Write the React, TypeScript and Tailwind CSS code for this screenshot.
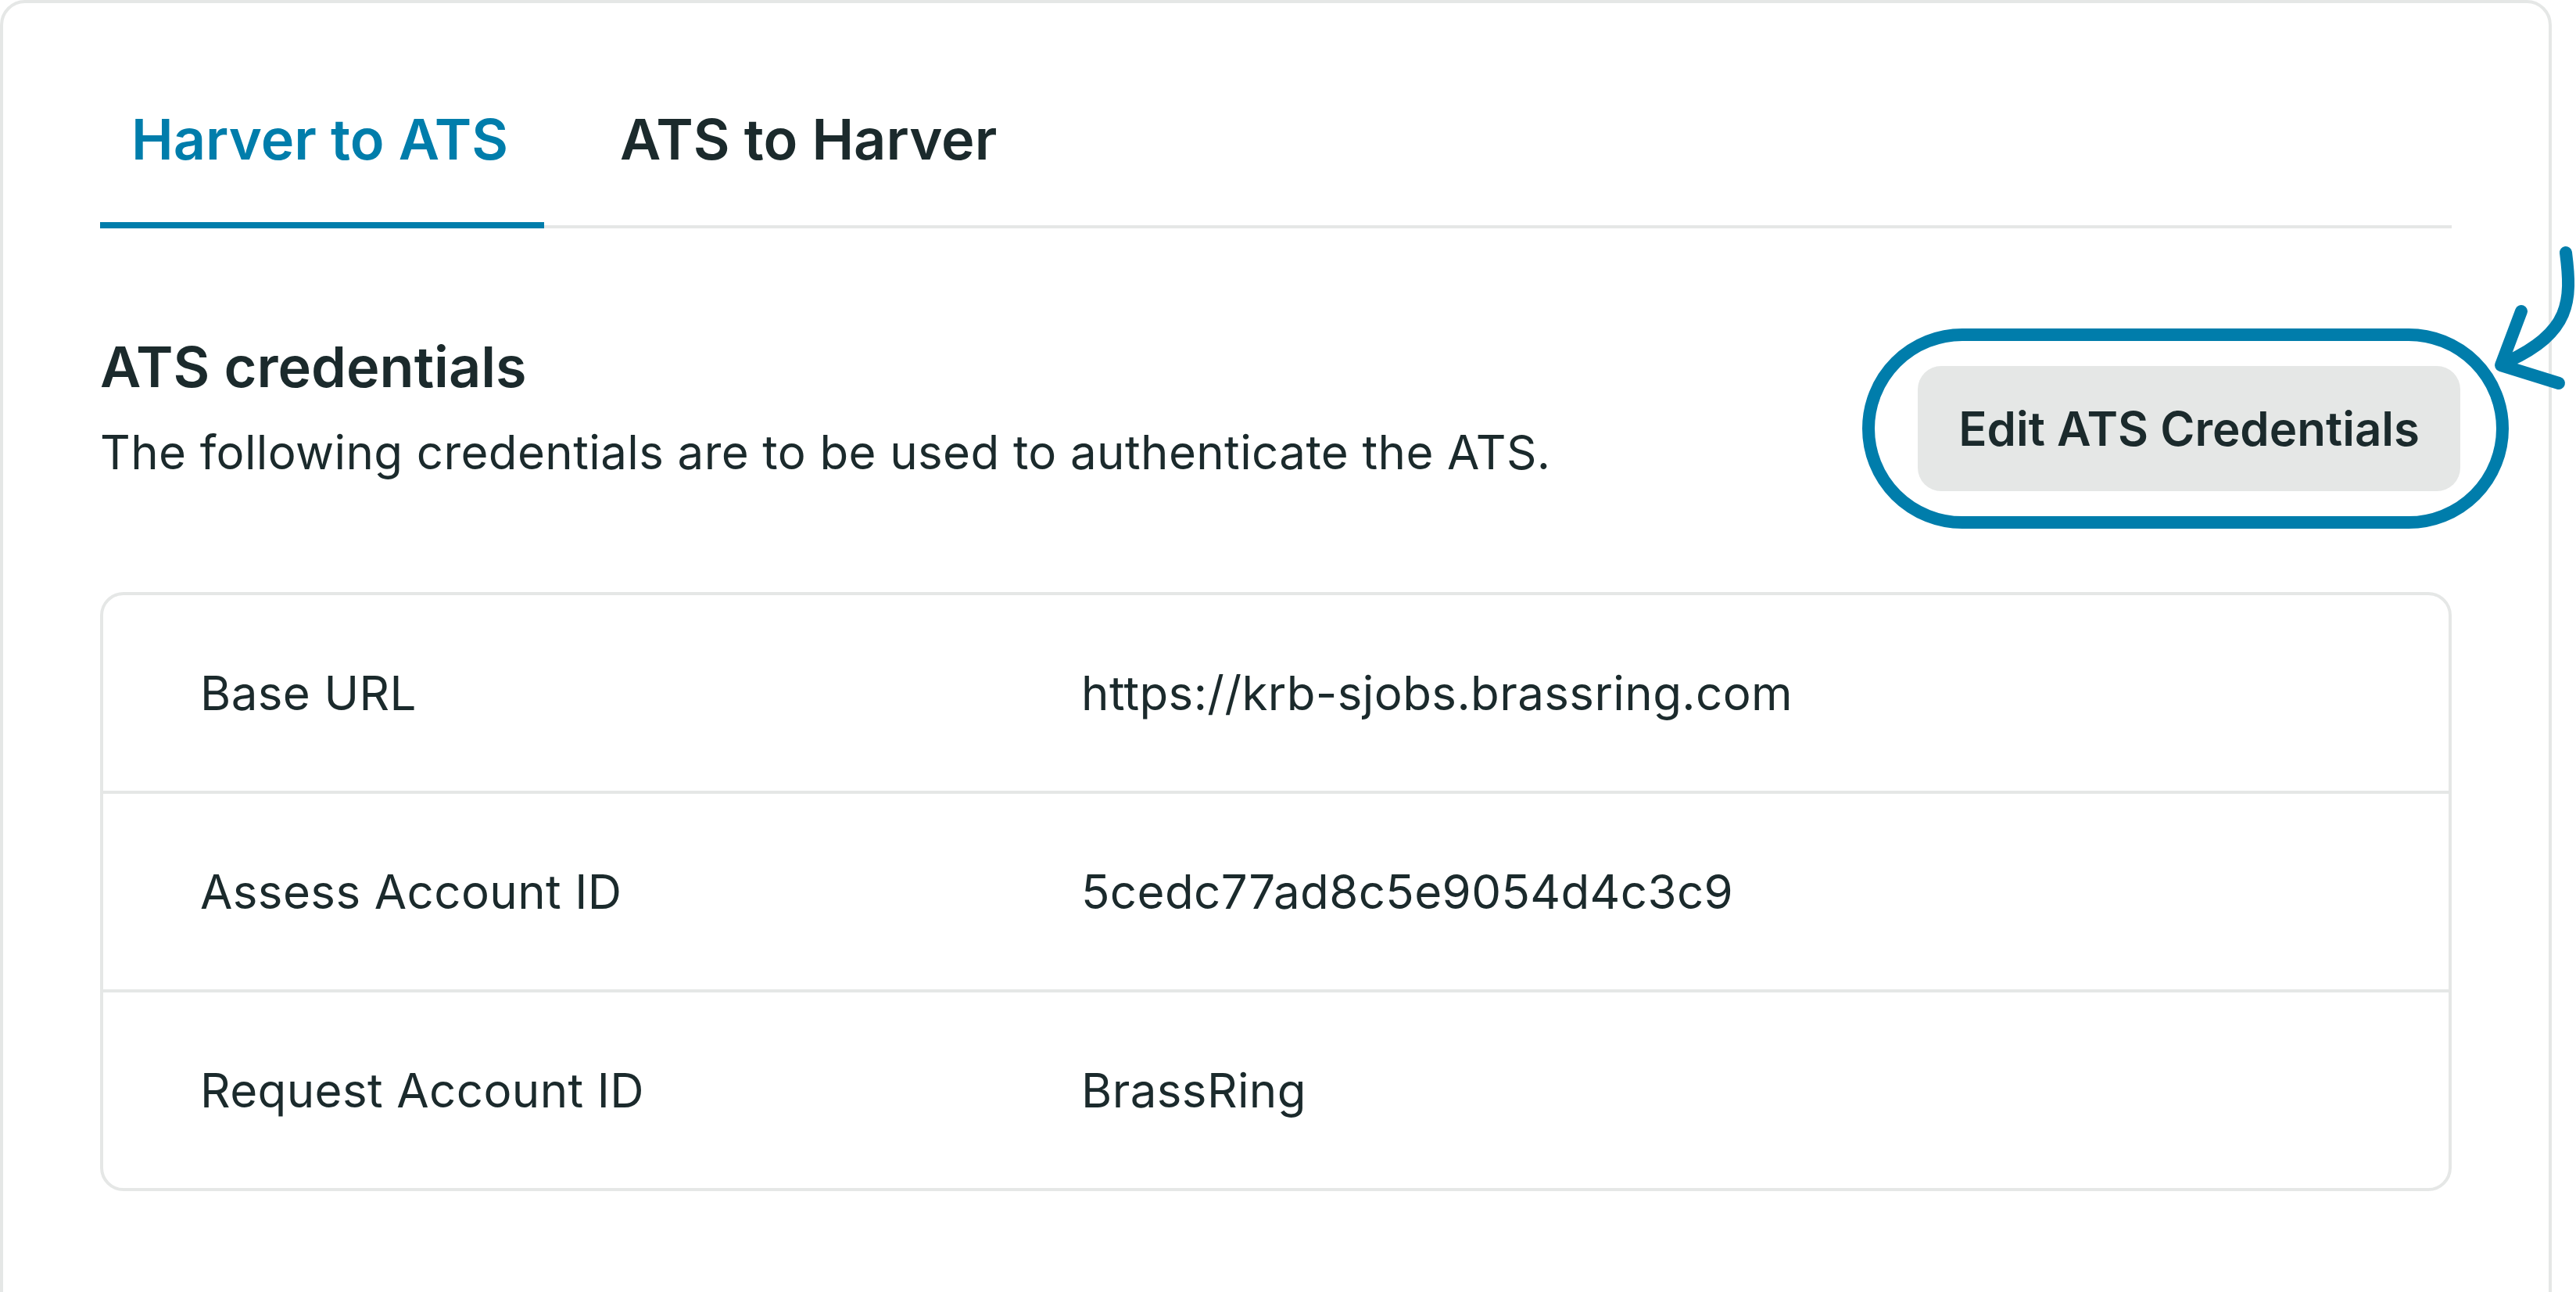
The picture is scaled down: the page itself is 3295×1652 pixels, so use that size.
import React from 'react';

const ROWS = [
  { label: 'Base URL', value: 'https://krb-sjobs.brassring.com' },
  { label: 'Assess Account ID', value: '5cedc77ad8c5e9054d4c3c9' },
  { label: 'Request Account ID', value: 'BrassRing' },
];

const TABS = ['Harver to ATS', 'ATS to Harver'];

const App: React.FC = () => {
  const activeTab = 0;

  return (
    <div
      className="relative w-[3295px] h-[1652px] overflow-hidden bg-white text-[#1b2a2c]"
      style={{ fontFamily: 'Inter, "Noto Sans", sans-serif' }}
    >
      <div className="w-[3264px] h-[1720px] border-4 border-[#e5e7e6] rounded-[32px] px-[124px] pt-[130px]">
        {/* tabs */}
        <div className="flex gap-[57px] border-b-4 border-[#e5e7e6]">
          {TABS.map((tab, i) => (
            <button
              key={tab}
              className={
                i === activeTab
                  ? 'pl-[40px] pr-[46px] pb-[62px] -mb-[4px] border-b-8 border-[#007dab] text-[72px] leading-[88px] font-semibold text-[#007dab]'
                  : 'pl-[40px] pr-[46px] pb-[62px] -mb-[4px] border-b-8 border-transparent text-[72px] leading-[88px] font-semibold text-[#1b2a2c]'
              }
            >
              {tab}
            </button>
          ))}
        </div>

        {/* header */}
        <div className="flex items-start justify-between pt-[133px]">
          <div>
            <h2 className="text-[72px] leading-[88px] font-semibold">ATS credentials</h2>
            <p className="mt-[29px] text-[60px] leading-[72px] tracking-[0.4px]">
              The following credentials are to be used to authenticate the ATS.
            </p>
          </div>
          <div className="relative mt-[43px] -mr-[11px]">
            <button className="h-[160px] px-[52px] rounded-[30px] bg-[#e5e7e6] text-[60px] font-semibold">
              Edit ATS Credentials
            </button>
            <div className="absolute -left-[71px] -right-[62px] -top-[48px] -bottom-[48px] rounded-full border-[16px] border-[#007dab] pointer-events-none" />
          </div>
        </div>

        {/* credentials table */}
        <div className="mt-[129px] border-4 border-[#e5e7e6] rounded-[30px]">
          {ROWS.map((row, i) => (
            <div
              key={row.label}
              className={
                i < ROWS.length - 1
                  ? 'flex items-center h-[254px] pl-[124px] border-b-4 border-[#e5e7e6] text-[60px] tracking-[0.4px]'
                  : 'flex items-center h-[250px] pl-[124px] text-[60px] tracking-[0.4px]'
              }
            >
              <div className="w-[1127px]">{row.label}</div>
              <div>{row.value}</div>
            </div>
          ))}
        </div>
      </div>

      {/* hand-drawn arrow annotation */}
      <svg
        className="absolute left-[3170px] top-[300px]"
        width="125"
        height="220"
        viewBox="3170 300 125 220"
        fill="none"
        stroke="#007dab"
        strokeWidth="16"
        strokeLinecap="round"
        strokeLinejoin="round"
      >
        <path d="M3282 323 C3290 385 3288 425 3208 462" />
        <path d="M3225 398 L3199 467 L3273 490" />
      </svg>
    </div>
  );
};

export default App;
